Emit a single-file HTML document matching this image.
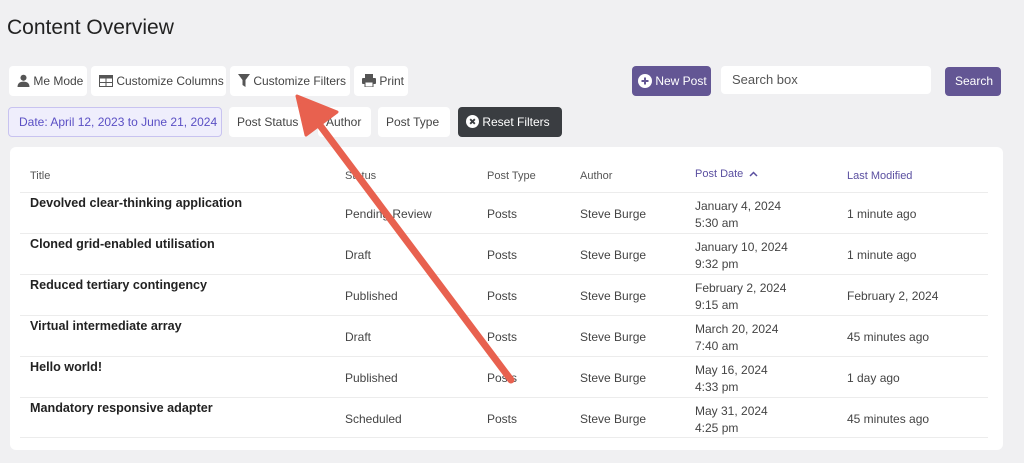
<!DOCTYPE html>
<html><head><style>
body{margin:0;width:1024px;height:463px;background:#f0f0f2;font-family:"Liberation Sans",sans-serif;position:relative;overflow:hidden;color:#2c2c2c}
.a{position:absolute}
h1{position:absolute;left:7px;top:16px;margin:0;font-size:21px;font-weight:normal;color:#222}
.btn{position:absolute;background:#fff;border-radius:4px;font-size:12px;color:#444;height:30px;line-height:30px;padding:0 8px;box-sizing:border-box;white-space:nowrap}
.card{position:absolute;left:10px;top:147px;width:993px;height:303px;background:#fff;border-radius:6px}
.row{position:absolute;left:20px;width:968px;height:41px;border-top:1px solid #ececec}
.c{position:absolute;font-size:12px;color:#444}
.t{font-size:12.6px;font-weight:bold;color:#222}
.h{font-size:11px;color:#555}
</style></head><body>
<h1>Content Overview</h1>
<div class="btn" style="left:9px;top:66px;width:78px">
<svg width="13" height="13" viewBox="0 0 12 12" style="vertical-align:-2px"><circle cx="6" cy="3.5" r="2.8" fill="#555"/><path d="M0.5 12 Q0.5 7 6 7 Q11.5 7 11.5 12Z" fill="#555"/></svg> Me Mode</div>
<div class="btn" style="left:91px;top:66px;width:135px">
<svg width="14" height="12" viewBox="0 0 14 12" style="vertical-align:-2px"><rect x="0.5" y="0.5" width="13" height="11" fill="none" stroke="#555"/><rect x="0.5" y="0.5" width="13" height="3" fill="#555"/><path d="M0 7.5H14M7 3v9" stroke="#555"/></svg> Customize Columns</div>
<div class="btn" style="left:230px;top:66px;width:120px">
<svg width="12" height="13" viewBox="0 0 12 13" style="vertical-align:-2px"><path d="M0 0H12L7.5 6V13L4.5 11V6Z" fill="#555"/></svg> Customize Filters</div>
<div class="btn" style="left:354px;top:66px;width:54px">
<svg width="14" height="13" viewBox="0 0 14 13" style="vertical-align:-2px"><rect x="3" y="0" width="8" height="4" fill="#555"/><rect x="0" y="4" width="14" height="6" rx="1" fill="#555"/><rect x="3" y="8" width="8" height="5" fill="#fff" stroke="#555"/></svg> Print</div>
<div class="btn" style="left:8px;top:107px;width:214px;background:#efeefc;border:1px solid #c8c3f0;color:#5a4fc4;line-height:28px;padding-left:10px">Date: April 12, 2023 to June 21, 2024</div>
<div class="btn" style="left:229px;top:107px;width:78px">Post Status</div>
<div class="btn" style="left:318px;top:107px;width:53px">Author</div>
<div class="btn" style="left:378px;top:107px;width:72px">Post Type</div>
<div class="btn" style="left:458px;top:107px;width:104px;background:#3a3d41;color:#fff">
<svg width="13" height="13" viewBox="0 0 14 14" style="vertical-align:-2px"><circle cx="7" cy="7" r="7" fill="#fff"/><path d="M4.5 4.5L9.5 9.5M9.5 4.5L4.5 9.5" stroke="#3a3d41" stroke-width="2"/></svg> Reset Filters</div>
<div class="btn" style="left:632px;top:66px;width:79px;background:#635694;color:#fff;padding:0 6px">
<svg width="14" height="14" viewBox="0 0 14 14" style="vertical-align:-3px"><circle cx="7" cy="7" r="7" fill="#fff"/><path d="M7 3.5V10.5M3.5 7H10.5" stroke="#635694" stroke-width="2"/></svg> New Post</div>
<div class="btn" style="left:721px;top:66px;width:210px;height:28px;line-height:28px;font-size:13px;color:#555;padding-left:11px">Search box</div>
<div class="btn" style="left:945px;top:67px;width:56px;height:29px;line-height:29px;background:#635694;color:#fff;padding-left:10px">Search</div>
<div class="card"></div>
<div class="c h" style="left:30px;top:170px">Title</div>
<div class="c h" style="left:345px;top:170px">Status</div>
<div class="c h" style="left:487px;top:170px">Post Type</div>
<div class="c h" style="left:580px;top:170px">Author</div>
<div class="c h" style="left:695px;top:168px;color:#5a4fa0">Post Date &nbsp;<svg width="9" height="6" viewBox="0 0 9 6"><path d="M1 5L4.5 1.5L8 5" fill="none" stroke="#5a4fa0" stroke-width="1.5"/></svg></div>
<div class="c h" style="left:847px;top:170px;color:#5a4fa0">Last Modified</div>
<div class="row" style="top:192px"></div><div class="row" style="top:233px"></div><div class="row" style="top:274px"></div><div class="row" style="top:315px"></div><div class="row" style="top:356px"></div><div class="row" style="top:397px;height:39px;border-bottom:1px solid #ececec"></div>

<div class="c t" style="left:30px;top:196px">Devolved clear-thinking application</div>
<div class="c" style="left:345px;top:207px">Pending Review</div><div class="c" style="left:487px;top:207px">Posts</div><div class="c" style="left:580px;top:207px">Steve Burge</div><div class="c" style="left:695px;top:198px;line-height:17px">January 4, 2024<br>5:30 am</div><div class="c" style="left:847px;top:207px">1 minute ago</div>

<div class="c t" style="left:30px;top:237px">Cloned grid-enabled utilisation</div>
<div class="c" style="left:345px;top:248px">Draft</div><div class="c" style="left:487px;top:248px">Posts</div><div class="c" style="left:580px;top:248px">Steve Burge</div><div class="c" style="left:695px;top:239px;line-height:17px">January 10, 2024<br>9:32 pm</div><div class="c" style="left:847px;top:248px">1 minute ago</div>

<div class="c t" style="left:30px;top:278px">Reduced tertiary contingency</div>
<div class="c" style="left:345px;top:289px">Published</div><div class="c" style="left:487px;top:289px">Posts</div><div class="c" style="left:580px;top:289px">Steve Burge</div><div class="c" style="left:695px;top:280px;line-height:17px">February 2, 2024<br>9:15 am</div><div class="c" style="left:847px;top:289px">February 2, 2024</div>

<div class="c t" style="left:30px;top:319px">Virtual intermediate array</div>
<div class="c" style="left:345px;top:330px">Draft</div><div class="c" style="left:487px;top:330px">Posts</div><div class="c" style="left:580px;top:330px">Steve Burge</div><div class="c" style="left:695px;top:321px;line-height:17px">March 20, 2024<br>7:40 am</div><div class="c" style="left:847px;top:330px">45 minutes ago</div>

<div class="c t" style="left:30px;top:360px">Hello world!</div>
<div class="c" style="left:345px;top:371px">Published</div><div class="c" style="left:487px;top:371px">Posts</div><div class="c" style="left:580px;top:371px">Steve Burge</div><div class="c" style="left:695px;top:362px;line-height:17px">May 16, 2024<br>4:33 pm</div><div class="c" style="left:847px;top:371px">1 day ago</div>

<div class="c t" style="left:30px;top:401px">Mandatory responsive adapter</div>
<div class="c" style="left:345px;top:412px">Scheduled</div><div class="c" style="left:487px;top:412px">Posts</div><div class="c" style="left:580px;top:412px">Steve Burge</div><div class="c" style="left:695px;top:403px;line-height:17px">May 31, 2024<br>4:25 pm</div><div class="c" style="left:847px;top:412px">45 minutes ago</div>

<svg class="a" style="left:0;top:0" width="1024" height="463">
<line x1="511" y1="380" x2="316" y2="120" stroke="#e8614f" stroke-width="7" stroke-linecap="round"/>
<path d="M297 96 L337 112 L306 135 Z" fill="#e8614f" stroke="#e8614f" stroke-width="3" stroke-linejoin="round"/>
</svg>
</body></html>
